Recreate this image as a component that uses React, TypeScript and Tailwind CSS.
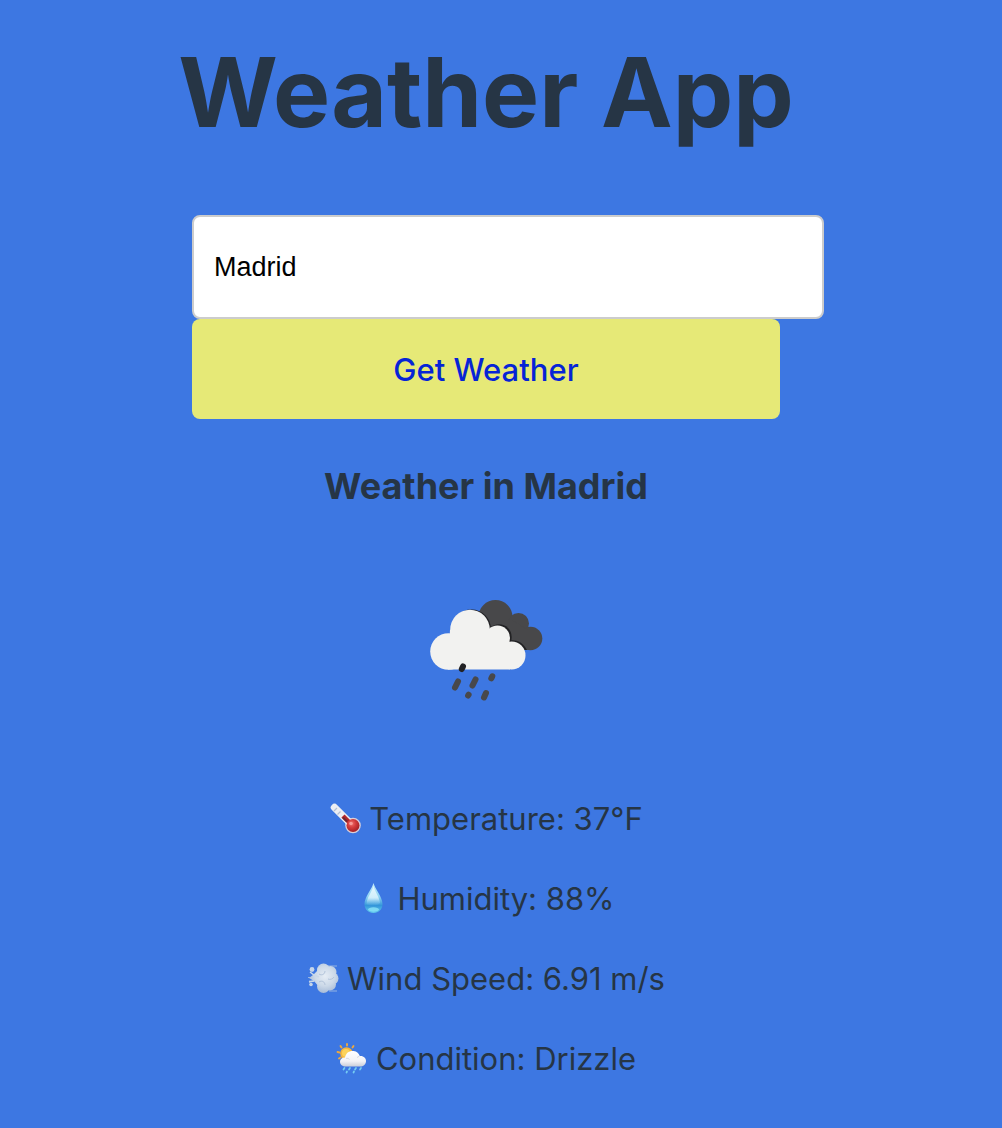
import { useState } from "react";
import type { FormEvent, ReactNode } from "react";

function DrizzleIcon() {
  return (
    <svg viewBox="0 0 140 120" className="h-[120px] w-[140px]" role="img" aria-label="Drizzle">
      <g fill="#48484a">
        <circle cx="79.500" cy="27" r="17" />
        <circle cx="102.500" cy="33.500" r="10.500" />
        <circle cx="114.500" cy="48.500" r="11.800" />
        <path d="M64 30H96L112 40V60H80Z" />
      </g>
      <g fill="#222224">
        <circle cx="55.500" cy="39" r="19.500" />
        <circle cx="83" cy="47" r="12.700" />
        <path d="M84 60C86 48 104 46 111 60Z" />
      </g>
      <g fill="#f2f2f0">
        <circle cx="54" cy="39.500" r="19.800" />
        <circle cx="32.500" cy="61.500" r="18.300" />
        <circle cx="81.500" cy="48" r="12.500" />
        <circle cx="95.500" cy="65.500" r="14" />
        <path d="M34 40H74L94 54V79.600H32Z" />
      </g>
      <g stroke="#48484a" strokeWidth="6" strokeLinecap="round">
        <path d="M47 76.500L45.800 79" stroke="#222224" />
        <path d="M42 91.500L39 97.500" />
        <path d="M59.500 89.500L56.500 95.500" />
        <path d="M76.300 86.300L75.300 88.300" />
        <path d="M52.600 104.700L52.100 105.500" />
        <path d="M70 103L68 107.500" />
      </g>
    </svg>
  );
}

function ThermometerIcon() {
  return (
    <svg viewBox="0 0 32 32" className="size-8 shrink-0" aria-hidden="true">
      <defs>
        <radialGradient id="bulb" cx="0.4" cy="0.35" r="0.65">
          <stop offset="0" stopColor="#f0706c" />
          <stop offset="0.5" stopColor="#d23a3a" />
          <stop offset="1" stopColor="#a51f25" />
        </radialGradient>
      </defs>
      <circle cx="24" cy="22.500" r="7.800" fill="#d9cfd9" />
      <path d="M5.500 4.500L22 21" stroke="#eceef3" strokeWidth="7.400" strokeLinecap="round" />
      <path d="M14 13L23 22" stroke="#b3262b" strokeWidth="4.500" />
      <path d="M5 8L8 5M8.500 11.500L11.500 8.500" stroke="#b4bfd3" strokeWidth="1.200" />
      <path d="M14 14.500L18 18.500" stroke="#6e2733" strokeWidth="2" />
      <circle cx="24" cy="22.500" r="6.500" fill="url(#bulb)" />
      <circle cx="22" cy="20.500" r="1.800" fill="#f79b97" />
    </svg>
  );
}

function DropletIcon() {
  return (
    <svg viewBox="0 0 32 32" className="size-8 shrink-0" aria-hidden="true">
      <defs>
        <linearGradient id="drop" x1="0" y1="0" x2="0" y2="1">
          <stop offset="0" stopColor="#c5ecfa" />
          <stop offset="0.45" stopColor="#8ed2f3" />
          <stop offset="0.75" stopColor="#3396da" />
          <stop offset="1" stopColor="#62c9ee" />
        </linearGradient>
        <linearGradient id="shine" x1="0" y1="0" x2="0" y2="1">
          <stop offset="0" stopColor="#f2fcff" />
          <stop offset="0.6" stopColor="#e0f5fd" />
          <stop offset="1" stopColor="#8fd0f2" stopOpacity="0" />
        </linearGradient>
      </defs>
      <path d="M16.500 0C15.500 5 7.500 14 7.500 21C7.500 26.500 11.500 30 16.500 30S25.500 26.500 25.500 21C25.500 14 17.500 5 16.500 0Z" fill="url(#drop)" />
      <path d="M16.500 3C15 9 10 14 9.500 21C12 23.500 21 23.500 23 20C22.500 14 18 9 16.500 3Z" fill="url(#shine)" opacity="0.8" />
      <ellipse cx="16.500" cy="26.500" rx="5.500" ry="2.200" fill="#8be4f7" opacity="0.8" />
    </svg>
  );
}

function WindIcon() {
  return (
    <svg viewBox="0 0 32 32" className="size-8 shrink-0" aria-hidden="true">
      <defs>
        <radialGradient id="puff" gradientUnits="userSpaceOnUse" cx="18" cy="13" r="18">
          <stop offset="0" stopColor="#e6edf5" />
          <stop offset="0.55" stopColor="#ccd9e8" />
          <stop offset="1" stopColor="#a3b8d6" />
        </radialGradient>
      </defs>
      <path d="M20 3H30M22 28H30M1 14.500H10M2 18H11" stroke="#94b4e2" strokeWidth="1" />
      <g fill="url(#puff)">
        <circle cx="16.500" cy="7" r="6.500" />
        <circle cx="23.500" cy="9" r="6" />
        <circle cx="25.500" cy="15.500" r="6" />
        <circle cx="23" cy="21.500" r="6" />
        <circle cx="16.500" cy="23.500" r="6.500" />
        <path d="M6 12L12 6H24V24H12L7 18L2 15Z" />
      </g>
      <g fill="#c5d5e9">
        <circle cx="5" cy="6.500" r="2.400" />
        <circle cx="4" cy="21.500" r="1.800" />
      </g>
      <path d="M3 9L7 12L12 14M2 19L7 18" stroke="#c9d8e9" strokeWidth="1.500" fill="none" />
      <path d="M12 11C15 13 18 11 18 8M12 19C15 17 18 19 18 22M21 16C23 17 26 16 27 14" stroke="#b3c4da" strokeWidth="1" fill="none" />
    </svg>
  );
}

function SunShowerIcon() {
  return (
    <svg viewBox="0 0 32 32" className="size-8 shrink-0" aria-hidden="true">
      <defs>
        <linearGradient id="cloud" x1="0" y1="0" x2="0" y2="1">
          <stop offset="0" stopColor="#ffffff" />
          <stop offset="0.65" stopColor="#f3f3f6" />
          <stop offset="1" stopColor="#c9ced9" />
        </linearGradient>
      </defs>
      <g stroke="#eda83e" strokeWidth="1.900" strokeLinecap="round">
        <path d="M11 1V2.500M17.500 3L16.500 4.500M4.500 3L5.500 4.500M1.500 9L3.500 9.500M3 15.500L4.500 14.500" />
      </g>
      <circle cx="10.500" cy="10.500" r="6.300" fill="#f7b63c" />
      <circle cx="10" cy="10" r="4" fill="#fcd35b" />
      <path d="M10 23.500C6.500 23.500 4 21.500 4 18.700C4 16 6.300 14.300 9 14.500C10 9.500 13.500 7.500 17.500 8C21 8.400 23 10.500 23.700 13C27.500 12.500 30 15 30 18C30 21.500 27.500 23.500 24 23.500Z" fill="url(#cloud)" />
      <path d="M10 15.500C11 15 13 15.500 13.500 16.500M21 14.500L23.500 13" stroke="#d7dbe3" strokeWidth="1" fill="none" />
      <g stroke="#75cdf2" strokeWidth="1.700" strokeLinecap="round">
        <path d="M8.500 25L7.500 26.500M14 25L13 26.500M20 25L19 26.500M25 25L24 26.500M11 28.500L10.500 29.500M18 28.500L17.500 29.500" />
      </g>
    </svg>
  );
}

function Reading({ icon, children }: { icon: ReactNode; children: ReactNode }) {
  return (
    <p className="flex h-12 items-center justify-center gap-2 text-[31px] leading-[48px] whitespace-nowrap">
      {icon}
      <span>{children}</span>
    </p>
  );
}

export default function App() {
  const [city, setCity] = useState("Madrid");
  const submit = (event: FormEvent) => event.preventDefault();

  return (
    <div className="flex min-h-screen justify-center bg-[#3d77e2] pr-[30px] font-['Inter',sans-serif] text-[#263545]">
      <main className="flex w-full max-w-[588px] flex-col items-center pt-8 pb-11">
        <h1 className="text-[96px] leading-[120px] font-bold whitespace-nowrap">Weather App</h1>

        <form onSubmit={submit} className="mt-[63px] w-full">
          <input
            type="text"
            aria-label="City"
            value={city}
            onChange={(event) => setCity(event.target.value)}
            className="block h-[104px] w-[calc(100%+44px)] rounded-lg border-2 border-[#ccc] bg-white px-5 font-['Liberation_Sans',Arial,sans-serif] text-[27px] text-black outline-none"
          />
          <button
            type="submit"
            className="h-[100px] w-full rounded-lg bg-[#e6e977] pt-0.5 text-[31px] font-medium text-[#0624d6]"
          >
            Get Weather
          </button>
        </form>

        <h2 className="mt-[43px] text-[36px] leading-[48px] font-bold whitespace-nowrap">Weather in Madrid</h2>

        <div className="mt-20">
          <DrizzleIcon />
        </div>

        <div className="mt-[85px] flex flex-col gap-8">
          <Reading icon={<ThermometerIcon />}>Temperature: 37°F</Reading>
          <Reading icon={<DropletIcon />}>Humidity: 88%</Reading>
          <Reading icon={<WindIcon />}>Wind Speed: 6.91 m/s</Reading>
          <Reading icon={<SunShowerIcon />}>Condition: Drizzle</Reading>
        </div>
      </main>
    </div>
  );
}
